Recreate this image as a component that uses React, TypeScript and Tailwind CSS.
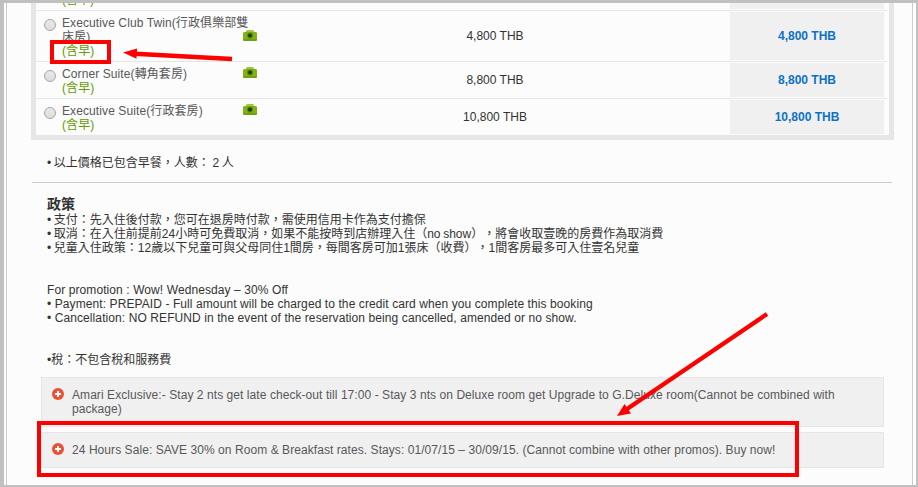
import React from 'react';

interface Room {
  lines: string[];
  price: string;
  cameraClass: string;
}

const ROOMS: Room[] = [
  { lines: ['Executive Club Twin(行政俱樂部雙', '床房)'], price: '4,800 THB', cameraClass: 'mt-[19px]' },
  { lines: ['Corner Suite(轉角套房)'], price: '8,800 THB', cameraClass: 'mt-[5px]' },
  { lines: ['Executive Suite(行政套房)'], price: '10,800 THB', cameraClass: 'mt-[5px]' },
];

const POLICIES = [
  '• 支付：先入住後付款，您可在退房時付款，需使用信用卡作為支付擔保',
  '• 取消：在入住前提前24小時可免費取消，如果不能按時到店辦理入住（no show），將會收取壹晚的房費作為取消費',
  '• 兒童入住政策：12歲以下兒童可與父母同住1間房，每間客房可加1張床（收費），1間客房最多可入住壹名兒童',
];

const PROMOTION = [
  'For promotion : Wow! Wednesday – 30% Off',
  '• Payment: PREPAID - Full amount will be charged to the credit card when you complete this booking',
  '• Cancellation: NO REFUND in the event of the reservation being cancelled, amended or no show.',
];

function CameraIcon({ className }: { className: string }) {
  return (
    <svg className={`h-[11px] w-[14px] shrink-0 ${className}`} viewBox="0 0 14 11">
      <path d="M4 0h6l1 2h2l1 1v7l-1 1H1l-1-1V3l1-1h2z" fill="#80b317" />
      <path d="M4 0h6l1 2H3z" fill="#9aca3c" />
      <path d="M0 9h14v1l-1 1H1l-1-1z" fill="#6fa00d" />
      <circle cx="7" cy="5.5" r="3.1" fill="#5d8a10" />
      <circle cx="7" cy="5.5" r="2" fill="#243f05" />
    </svg>
  );
}

function PlusIcon() {
  return (
    <svg className="h-3 w-3 shrink-0" viewBox="0 0 12 12">
      <circle cx="6" cy="6" r="6" fill="#f04e30" />
      <path d="M6 3v6M3 6h6" stroke="#fff" strokeWidth="2" />
    </svg>
  );
}

function Line({ children }: { children: React.ReactNode }) {
  return <div className="h-[14px] whitespace-nowrap">{children}</div>;
}

function RoomRow({ room }: { room: Room }) {
  return (
    <div className="mr-0.5 flex border-t border-[#e6e6e6] text-[#58585a]">
      <div className="flex w-[207px] pt-[5px] pb-[3px] pl-2">
        <span className="mt-[3px] mr-1.5 h-3 w-3 shrink-0 rounded-full border border-[#a6a6a6] bg-linear-to-b from-[#e9e9e9] to-[#dcdcdc]" />
        <div className="tracking-[0.1px]">
          {room.lines.map((line) => (
            <Line key={line}>{line}</Line>
          ))}
          <div className="h-[14px] whitespace-nowrap text-[#669900]">(含早)</div>
        </div>
      </div>
      <CameraIcon className={room.cameraClass} />
      <div className="flex w-[473px] items-center justify-center pl-[3px] text-[#333333]">{room.price}</div>
      <div className="my-px flex w-[154px] items-center justify-center bg-[#f0f0f0] font-bold text-[#0c72c6]">
        {room.price}
      </div>
    </div>
  );
}

function Promo({ children, className }: { children: React.ReactNode; className: string }) {
  return (
    <div className={`ml-[34px] flex w-[843px] gap-2 border border-[#e6e6e6] bg-[#f0f0f0] pt-2.5 pl-2.5 tracking-[0.065px] text-[#58585a] ${className}`}>
      <PlusIcon />
      <div>{children}</div>
    </div>
  );
}

/** Hand-drawn style markers lying over the page. */
function Annotations() {
  return (
    <>
      <div className="absolute top-10 left-[50px] h-6 w-[61px] border-4 border-[#ff0000]" />
      <div className="absolute top-[421px] left-[37px] h-14 w-[762px] border-4 border-[#ff0000]" />
      <svg className="absolute inset-0 h-[487px] w-[918px]" viewBox="0 0 918 487">
        <g stroke="#ff0000" strokeWidth="4.4" fill="#ff0000">
          <path d="M232 59 135 53.7M767 314 627 409" />
          <path d="M123 52.5 137 48.5 136.5 58.7zM617 416 624.5 404 631 413.5z" stroke="none" />
        </g>
      </svg>
    </>
  );
}

export default function App() {
  return (
    <div className="relative h-[487px] w-[918px] overflow-hidden border-t-[3px] border-r-2 border-b-2 border-l-4 border-[#c0c0c0] bg-white pr-[3px] pl-0.5 font-['Liberation_Sans','Noto_Sans_CJK_TC',sans-serif] text-[12px] leading-[14px] text-[#333333] [text-spacing-trim:space-all]">
      <div className="h-full overflow-hidden border-x border-[#cccccc] bg-[#fcfcfc]">
        <div className="ml-6 w-[863px] border-x-[5px] border-b-[5px] border-[#e6e6e6]">
          <div className="flex h-[7px] items-end overflow-hidden pl-[26px] text-[#669900]">
            <div className="mb-[3px] w-[668px] shrink-0">(含早)</div>
            <div className="mb-px h-[6px] w-[154px] shrink-0 bg-[#f0f0f0]" />
          </div>
          {ROOMS.map((room) => (
            <RoomRow key={room.price} room={room} />
          ))}
        </div>

        <div className="mt-4 ml-10 [word-spacing:-0.7px]">
          <Line>• 以上價格已包含早餐，人數： 2 人</Line>
        </div>
        <div className="mt-3 ml-[25px] h-px w-[860px] bg-[#cccccc]" />

        <div className="mt-3.5 ml-10 [word-spacing:-0.7px]">
          <h3 className="h-4 text-[14px] font-bold">政策</h3>
          {POLICIES.map((text) => (
            <Line key={text}>{text}</Line>
          ))}
        </div>
        <div className="mt-7 ml-10 tracking-[0.09px]">
          {PROMOTION.map((text) => (
            <Line key={text}>{text}</Line>
          ))}
        </div>
        <div className="mt-7 ml-10">
          <Line>•稅：不包含稅和服務費</Line>
        </div>

        <Promo className="mt-2.5 h-[50px]">
          <Line>Amari Exclusive:- Stay 2 nts get late check-out till 17:00 - Stay 3 nts on Deluxe room get Upgrade to G.Deluxe room(Cannot be combined with</Line>
          <Line>package)</Line>
        </Promo>
        <Promo className="mt-[5px] h-9">
          <Line>24 Hours Sale: SAVE 30% on Room &amp; Breakfast rates. Stays: 01/07/15 – 30/09/15. (Cannot combine with other promos). Buy now!</Line>
        </Promo>
      </div>
      <div className="absolute -top-[3px] -left-1">
        <Annotations />
      </div>
    </div>
  );
}
